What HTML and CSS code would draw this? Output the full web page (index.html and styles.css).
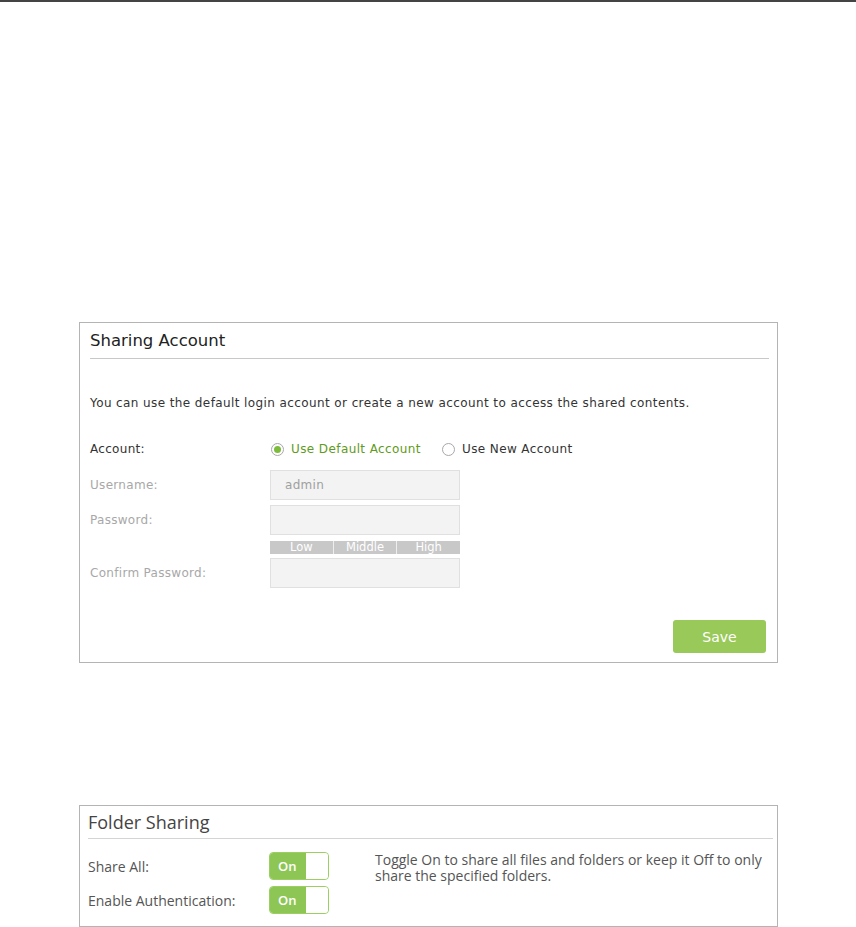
FILE: index.html
```html
<!DOCTYPE html>
<html>
<head>
<meta charset="utf-8">
<link rel="stylesheet" href="styles.css">
</head>
<body>
<div class="topline"></div>

<section class="panel account">
  <h2 class="panel-title">Sharing Account</h2>
  <p class="desc">You can use the default login account or create a new account to access the shared contents.</p>

  <div class="row row-account">
    <div class="label dark">Account:</div>
    <div class="radios">
      <span class="radio checked"><span class="dot"></span></span>
      <span class="radio-text active">Use Default Account</span>
      <span class="radio"></span>
      <span class="radio-text">Use New Account</span>
    </div>
  </div>

  <div class="row row-user">
    <div class="label">Username:</div>
    <div class="input">admin</div>
  </div>
  <div class="row row-pass">
    <div class="label">Password:</div>
    <div class="input"></div>
  </div>
  <div class="row row-strength">
    <div class="label"></div>
    <div class="strength">
      <span>Low</span><span>Middle</span><span>High</span>
    </div>
  </div>
  <div class="row row-confirm">
    <div class="label">Confirm Password:</div>
    <div class="input"></div>
  </div>

  <div class="footer">
    <button class="save">Save</button>
  </div>
</section>

<section class="panel folder">
  <h2 class="panel-title">Folder Sharing</h2>
  <div class="folder-body">
    <div class="fcontrols">
      <div class="frow">
        <div class="flabel">Share All:</div>
        <div class="toggle"><span class="on">On</span><span class="knob"></span></div>
      </div>
      <div class="frow">
        <div class="flabel">Enable Authentication:</div>
        <div class="toggle"><span class="on">On</span><span class="knob"></span></div>
      </div>
    </div>
    <div class="fdesc"><div>Toggle On to share all files and folders or keep it Off to only</div><div>share the specified folders.</div></div>
  </div>
</section>
</body>
</html>
```

FILE: styles.css
```css
* { box-sizing: border-box; }
html, body { margin: 0; padding: 0; background: #fff; }
body { font-family: "DejaVu Sans", Verdana, sans-serif; color: #333; }

.topline { height: 2px; background: #444; }

.panel {
  width: 699px;
  margin-left: 79px;
  border: 1px solid #b4b4b4;
  background: #fff;
}

/* Sharing Account */
.account {
  margin-top: 320px;
  padding: 0 8px 9px 10px;
}
.account .panel-title {
  margin: 0;
  font-weight: normal;
  font-size: 16.5px;
  line-height: 35px;
  color: #222;
  border-bottom: 1px solid #c8c8c8;
}
.desc {
  margin: 36px 0 0;
  font-size: 12px;
  letter-spacing: 0.4px;
  line-height: 16px;
  color: #333;
}
.row { display: flex; align-items: center; }
.label { width: 180px; flex: none; font-size: 12px; letter-spacing: 0.3px; color: #a8a8a8; }
.label.dark { color: #333; }
.row-account { margin-top: 28px; height: 20px; }
.row-user { margin-top: 11px; }
.row-pass { margin-top: 5px; }
.row-strength { margin-top: 6px; }
.row-confirm { margin-top: 4px; }

.radios { display: flex; align-items: center; font-size: 12px; letter-spacing: 0.4px; }
.radio {
  width: 13px; height: 13px; border: 1px solid #a8a8a8; border-radius: 50%;
  display: inline-flex; align-items: center; justify-content: center;
  margin-left: 1px;
}
.radio .dot { width: 7px; height: 7px; border-radius: 50%; background: #7dbb3c; }
.radio-text { margin-left: 7px; margin-right: 20px; color: #333; }
.radio-text.active { color: #5f9a22; }

.input {
  width: 190px; height: 30px;
  background: #f3f3f3; border: 1px solid #e0e0e0;
  font-size: 12px; letter-spacing: 0.3px; color: #a0a0a0;
  padding-left: 14px; line-height: 28px;
}

.strength { display: flex; width: 190px; height: 13px; }
.strength span {
  flex: 1; background: #c8c8c8; color: #fff;
  font-size: 11.5px; line-height: 13px; text-align: center;
}
.strength span + span { border-left: 1px solid #eee; }

.footer { display: flex; justify-content: flex-end; margin-top: 32px; padding-right: 3px; }
.save {
  width: 93px; height: 33px;
  background: #99c958; color: #fff; border: none; border-radius: 3px;
  font-family: "DejaVu Sans", Verdana, sans-serif; font-size: 14px;
}

/* Folder Sharing */
.folder {
  margin-top: 142px;
  padding: 0 4px 0 8px;
  height: 122px;
  font-family: "Open Sans", "DejaVu Sans", sans-serif;
}
.folder .panel-title {
  margin: 0;
  font-weight: normal;
  font-size: 18px;
  line-height: 32px;
  color: #444;
  border-bottom: 1px solid #d4d4d4;
}
.folder-body { display: flex; margin-top: 13px; }
.fcontrols { display: flex; flex-direction: column; gap: 6px; flex: none; }
.frow { display: flex; align-items: center; height: 28px; }
.flabel { width: 181px; font-size: 14px; color: #555; }
.fdesc {
  margin-left: 46px;
  font-size: 14px; line-height: 16px; color: #555;
}
.toggle {
  width: 60px; height: 28px;
  border: 1px solid #9ccf62; border-radius: 4px;
  display: flex; overflow: hidden; background: #fff;
}
.toggle .on {
  width: 36px; background: #8ec656; color: #fff;
  font-size: 13px; font-weight: 600; line-height: 26px; padding-left: 8px;
}
.toggle .knob { flex: 1; background: #fff; border-radius: 3px; }
```
